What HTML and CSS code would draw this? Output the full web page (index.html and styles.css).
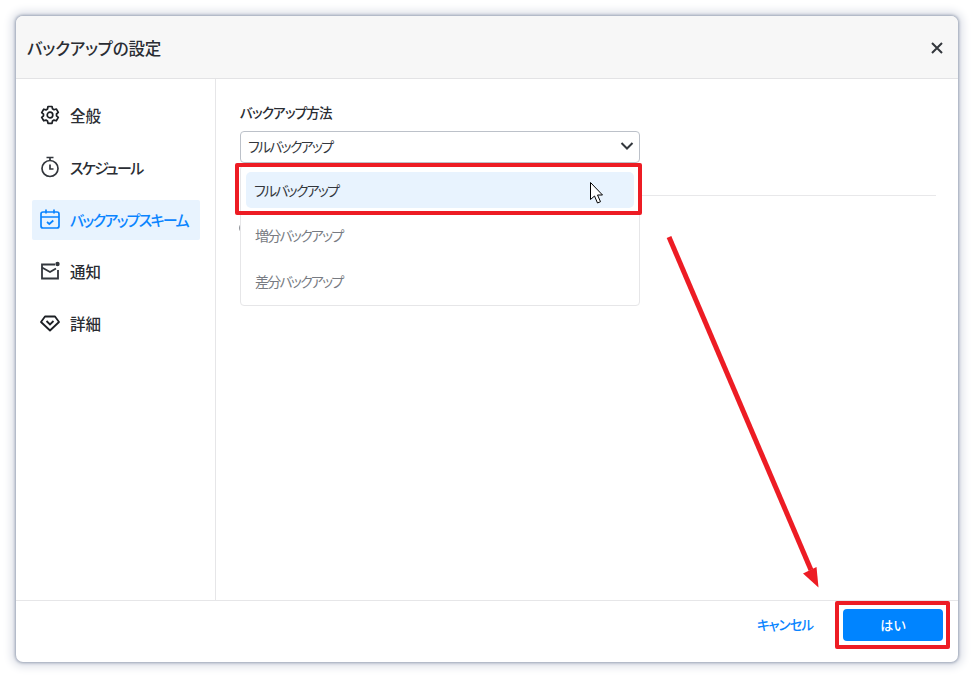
FILE: index.html
```html
<!DOCTYPE html>
<html lang="ja">
<head>
<meta charset="utf-8">
<title>バックアップの設定</title>
<link rel="stylesheet" href="styles.css">
</head>
<body>
<div class="dialog">
  <header class="head">
    <h1 class="title">バックアップの設定</h1>
    <svg class="close" width="14" height="14" viewBox="0 0 14 14"><path d="M2 2l10 10M12 2L2 12" stroke="#33373d" stroke-width="2" fill="none"/></svg>
  </header>
  <div class="main">
    <nav class="side">
      <div class="item">
        <svg class="ico" width="20" height="20" viewBox="0 0 20 20" fill="none" stroke="#1d2025" stroke-width="1.700"><path d="M8 1.500h4l.5 2.300 1.500.9 2.300-.7 2 3.400-1.800 1.600v1.800l1.800 1.600-2 3.400-2.300-.7-1.500.9-.5 2.300H8l-.5-2.300-1.500-.9-2.300.7-2-3.400 1.800-1.600V9.200L1.700 7.600l2-3.400 2.300.7 1.500-.9z" stroke-linejoin="round"/><circle cx="10" cy="10" r="2.800"/></svg>
        <span>全般</span>
      </div>
      <div class="item">
        <svg class="ico" width="20" height="22" viewBox="0 0 20 22" fill="none" stroke="#33373d" stroke-width="1.700"><path d="M6.500 1.500h7M10 1.500v3"/><circle cx="10" cy="12.500" r="8"/><path d="M10 8.500v4.500h3.500"/></svg>
        <span class="kana">スケジュール</span>
      </div>
      <div class="item active">
        <svg class="ico" width="20" height="20" viewBox="0 0 20 20" fill="none" stroke="#0a84ff" stroke-width="1.700"><rect x="1" y="3" width="18" height="16" rx="2"/><path d="M1 8h18M6 .5v4M14 .5v4M7 13l2.300 2 4-3.500"/></svg>
        <span class="kana">バックアップスキーム</span>
      </div>
      <div class="item">
        <svg class="ico" width="20" height="20" viewBox="0 0 20 20" fill="none" stroke="#33373d" stroke-width="1.800"><path d="M15 3.500H2v14h16V9"/><path d="M2 6.500l8 4.500 6-3.500"/><circle cx="17.500" cy="3" r="2.200" fill="#33373d" stroke="none"/></svg>
        <span>通知</span>
      </div>
      <div class="item">
        <svg class="ico" width="20" height="20" viewBox="0 0 20 20" fill="none" stroke="#1d2025" stroke-width="1.800"><path d="M5 3.500h10l4 5.500-9 8.500L1 9z" stroke-linejoin="round"/><path d="M6.500 8l3.500 3.500L13.500 8"/></svg>
        <span>詳細</span>
      </div>
    </nav>
    <section class="content">
      <label class="label">バックアップ方法</label>
      <div class="select">
        <span>フルバックアップ</span>
        <svg width="14" height="10" viewBox="0 0 14 10"><path d="M1.500 2l5.500 5.500L12.500 2" stroke="#33373d" stroke-width="2" fill="none"/></svg>
      </div>
      <div class="rule"></div>
      <div class="radio"></div>
      <ul class="menu">
        <li class="opt on">フルバックアップ</li>
        <li class="opt">増分バックアップ</li>
        <li class="opt">差分バックアップ</li>
      </ul>
    </section>
  </div>
  <footer class="foot">
    <span class="cancel">キャンセル</span>
    <span class="ok">はい</span>
  </footer>
</div>
<div class="mark mark-opt"></div>
<div class="mark mark-ok"></div>
<svg class="arrow" width="974" height="678" viewBox="0 0 974 678">
  <path d="M669 237L811 570" stroke="#ed1c24" stroke-width="5" fill="none"/>
  <path d="M818.500 587.500L803 573.500 816.500 567z" fill="#ed1c24"/>
  <path d="M590.500 182.500v17l4-3.500 3 7 3-1.300-3-6.700h5z" fill="#fff" stroke="#000" stroke-width="1"/>
</svg>
</body>
</html>
```

FILE: styles.css
```css
* { box-sizing: border-box; }
html, body { margin: 0; height: 100%; }
body {
  width: 974px;
  height: 678px;
  padding: 16px;
  background: #fff;
  overflow: hidden;
  font-family: "Noto Sans CJK JP", "Noto Sans", sans-serif;
  font-feature-settings: "palt";
  color: #2a2d33;
  position: relative;
}
.dialog {
  width: 942px;
  height: 646px;
  background: #fff;
  border-radius: 7px;
  box-shadow: 0 0 3px 1px #9aa3b5, 0 0 9px 5px #e0e3ea;
  display: flex;
  flex-direction: column;
  overflow: hidden;
}
.head {
  height: 63px;
  flex: none;
  background: #f7f7f7;
  border-bottom: 1px solid #e3e3e5;
  display: flex;
  align-items: center;
  justify-content: space-between;
  padding: 3px 14px 1px 11px;
}
.title { margin: 0; font-size: 16.500px; font-weight: 500; line-height: 24px; color: #2a2d33; letter-spacing: -.2px; }
.main { flex: 1; display: flex; min-height: 0; }
.side {
  width: 200px;
  flex: none;
  border-right: 1px solid #e6e6e8;
  padding: 17px 15px 0 16px;
  display: flex;
  flex-direction: column;
  gap: 12px;
}
.item {
  height: 40px;
  display: flex;
  align-items: center;
  gap: 10px;
  padding: 0 0 2px 8px;
  font-size: 15.500px;
  font-weight: 500;
  border-radius: 2px;
  white-space: nowrap;
}
.kana { font-size: 15px; letter-spacing: -1.700px; }
.ico { flex: none; }
.active { background: #e8f3fe; color: #0a84ff; }
.content { flex: 1; position: relative; padding: 21px 22px 0 24px; }
.label { display: block; font-size: 13.500px; font-weight: 500; line-height: 24px; height: 31px; letter-spacing: -.8px; }
.select {
  width: 400px;
  height: 32px;
  border: 1px solid #bcc1c9;
  border-radius: 4px;
  display: flex;
  align-items: center;
  justify-content: space-between;
  padding: 0 5px 2px 7px;
  font-size: 14px;
  color: #33373d;
  letter-spacing: -1.800px;
}
.rule { height: 1px; background: #e8e8ea; margin-top: 32px; }
.radio { width: 12px; height: 12px; margin: 26px 0 0 -1px; border: 1px solid #8d9197; border-radius: 50%; }
.menu {
  position: absolute;
  left: 24px;
  top: 86px;
  width: 400px;
  height: 141px;
  margin: 0;
  padding: 6px 5px;
  list-style: none;
  background: #fff;
  border: 1px solid #e6e6e8;
  border-radius: 4px;
  display: flex;
  flex-direction: column;
  font-size: 14px;
  color: #777b82;
  letter-spacing: -1.800px;
}
.opt { height: 46px; flex: none; display: flex; align-items: center; padding: 0 0 2px 9px; border-radius: 5px; }
.opt.on { height: 36px; margin-bottom: 5px; background: #e8f3fe; color: #33373d; padding: 0 0 1px 8px; }
.foot {
  height: 62px;
  flex: none;
  border-top: 1px solid #e6e6e8;
  display: flex;
  align-items: center;
  justify-content: flex-end;
  gap: 30px;
  padding: 0 15px 14px 0;
}
.cancel { font-size: 13.500px; font-weight: 500; color: #0a84ff; letter-spacing: -1px; padding-bottom: 2px; }
.ok {
  width: 100px;
  height: 32px;
  background: #0084ff;
  color: #fff;
  border-radius: 4px;
  font-size: 13px;
  font-weight: 500;
  display: flex;
  align-items: center;
  justify-content: center;
}
.mark {
  position: absolute;
  border: 4px solid #ed1c24;
  border-radius: 2px;
}
.mark-opt { left: 235px; top: 163px; width: 407px; height: 52px; }
.mark-ok { left: 835px; top: 601px; width: 115px; height: 48px; }
.arrow { position: absolute; left: 0; top: 0; pointer-events: none; }
```
